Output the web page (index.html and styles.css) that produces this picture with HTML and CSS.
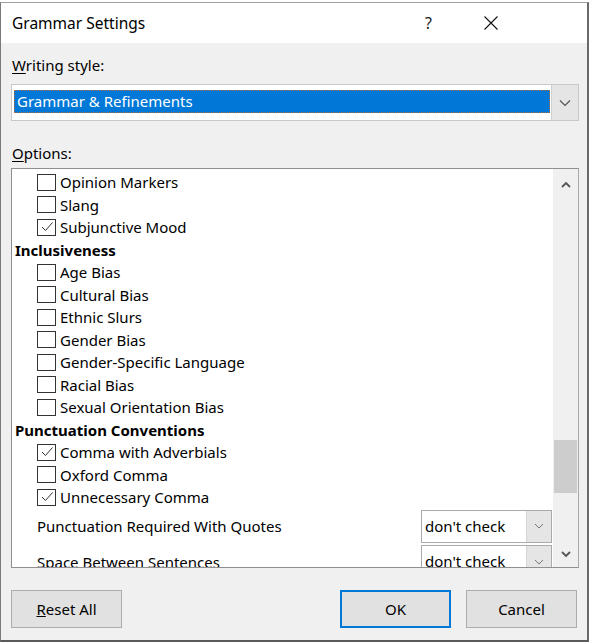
FILE: index.html
```html
<!DOCTYPE html>
<html>
<head>
<meta charset="utf-8">
<link rel="stylesheet" href="styles.css">
</head>
<body>
<div class="dialog">
  <div class="titlebar">
    <span class="title">Grammar Settings</span>
    <span class="help">?</span>
    <svg class="close" width="14" height="14" viewBox="0 0 14 14"><path d="M0.5 0.5L13.5 13.5M13.5 0.5L0.5 13.5" stroke="#111" stroke-width="1.1" fill="none"/></svg>
  </div>
  <div class="client">
    <div class="label"><u>W</u>riting style:</div>
    <div class="combo">
      <div class="combo-field"><span class="sel">Grammar &amp; Refinements</span></div>
      <div class="combo-btn"><svg width="12" height="8" viewBox="0 0 12 8"><path d="M1 1.5L6 6.5L11 1.5" stroke="#555" stroke-width="1.2" fill="none"/></svg></div>
    </div>
    <div class="label options-label"><u>O</u>ptions:</div>
    <div class="listbox">
      <div class="list">
        <div class="item"><span class="box"></span>Opinion Markers</div>
        <div class="item"><span class="box"></span>Slang</div>
        <div class="item"><span class="box checked"><svg width="14" height="12" viewBox="0 0 14 12"><path d="M2 6L5.5 9.5L12.5 1.5" stroke="#333" stroke-width="1" fill="none"/></svg></span>Subjunctive Mood</div>
        <div class="head">Inclusiveness</div>
        <div class="item"><span class="box"></span>Age Bias</div>
        <div class="item"><span class="box"></span>Cultural Bias</div>
        <div class="item"><span class="box"></span>Ethnic Slurs</div>
        <div class="item"><span class="box"></span>Gender Bias</div>
        <div class="item"><span class="box"></span>Gender-Specific Language</div>
        <div class="item"><span class="box"></span>Racial Bias</div>
        <div class="item"><span class="box"></span>Sexual Orientation Bias</div>
        <div class="head">Punctuation Conventions</div>
        <div class="item"><span class="box checked"><svg width="14" height="12" viewBox="0 0 14 12"><path d="M2 6L5.5 9.5L12.5 1.5" stroke="#333" stroke-width="1" fill="none"/></svg></span>Comma with Adverbials</div>
        <div class="item"><span class="box"></span>Oxford Comma</div>
        <div class="item"><span class="box checked"><svg width="14" height="12" viewBox="0 0 14 12"><path d="M2 6L5.5 9.5L12.5 1.5" stroke="#333" stroke-width="1" fill="none"/></svg></span>Unnecessary Comma</div>
        <div class="subrow first">
          <span class="subtext">Punctuation Required With Quotes</span>
          <div class="mini">
            <span class="mini-text">don't check</span>
            <span class="mini-btn"><svg width="10" height="6" viewBox="0 0 10 6"><path d="M1 1L5 5L9 1" stroke="#777" stroke-width="1" fill="none"/></svg></span>
          </div>
        </div>
        <div class="subrow">
          <span class="subtext">Space Between Sentences</span>
          <div class="mini">
            <span class="mini-text">don't check</span>
            <span class="mini-btn"><svg width="10" height="6" viewBox="0 0 10 6"><path d="M1 1L5 5L9 1" stroke="#777" stroke-width="1" fill="none"/></svg></span>
          </div>
        </div>
      </div>
      <div class="scrollbar">
        <div class="arrow up"><svg width="10" height="7" viewBox="0 0 10 7"><path d="M1 6L5 2L9 6" stroke="#555" stroke-width="1.8" fill="none"/></svg></div>
        <div class="track"><div class="thumb"></div></div>
        <div class="arrow down"><svg width="10" height="7" viewBox="0 0 10 7"><path d="M1 1L5 5L9 1" stroke="#555" stroke-width="1.8" fill="none"/></svg></div>
      </div>
    </div>
    <div class="buttons">
      <button class="btn"><u>R</u>eset All</button>
      <span class="spacer"></span>
      <button class="btn default">OK</button>
      <button class="btn">Cancel</button>
    </div>
  </div>
</div>
</body>
</html>
```
FILE: styles.css
```css
html, body {
  margin: 0;
  padding: 0;
  background: #ffffff;
  overflow: hidden;
  height: 642px;
}
body {
  font-family: "Noto Sans", "DejaVu Sans", sans-serif;
  color: #000;
}
.dialog {
  margin-top: 2px;
  border-top: 1px solid #a0a0a0;
  border-left: 1px solid #7a7a7a;
  border-right: 2px solid #6a6a6a;
  border-bottom: 2px solid #5a5a5a;
  display: flex;
  flex-direction: column;
  box-sizing: border-box;
  width: 589px;
  height: 640px;
}
.titlebar {
  height: 40px;
  background: #fff;
  display: flex;
  align-items: center;
  flex: none;
}
.title {
  font-size: 15.5px;
  margin-left: 11px;
  flex: 1;
}
.help {
  font-size: 16px;
  color: #222;
  margin-right: 52px;
}
.close {
  margin-right: 89px;
}
.client {
  flex: 1;
  background: #f0f0f0;
  padding: 0 8px 0 10px;
  display: flex;
  flex-direction: column;
}
.label {
  font-size: 15px;
  line-height: 20px;
  margin-top: 12px;
  margin-left: 1px;
}
.label u { text-decoration-thickness: 1px; text-underline-offset: 2px; }
.combo {
  margin-top: 9px;
  height: 37px;
  border: 1px solid #c8c8c8;
  background: #fff;
  display: flex;
  box-sizing: border-box;
}
.combo-field {
  flex: 1;
  padding: 5px 1px 5px 2px;
}
.sel {
  display: block;
  height: 23px;
  box-sizing: border-box;
  background: #0078d7;
  border: 1px dotted #b06a3a;
  color: #fff;
  font-size: 15px;
  line-height: 21px;
  padding-left: 2px;
}
.combo-btn {
  width: 26px;
  background: #e5e5e5;
  border-left: 1px solid #d0d0d0;
  display: flex;
  align-items: center;
  justify-content: center;
}
.options-label {
  margin-top: 22px;
}
.listbox {
  margin-top: 5px;
  height: 400px;
  border: 1px solid #8f8f8f;
  border-right-color: #a8a8a8;
  background: #fff;
  display: flex;
  box-sizing: border-box;
  overflow: hidden;
}
.list {
  flex: 1;
  padding-top: 2px;
  font-size: 15px;
  overflow: hidden;
}
.item, .head {
  height: 22.5px;
  line-height: 22.5px;
  display: flex;
  align-items: center;
  white-space: nowrap;
}
.item {
  padding-left: 25px;
}
.head {
  padding-left: 3px;
  font-weight: bold;
}
.box {
  width: 19px;
  height: 17px;
  box-sizing: border-box;
  border: 1px solid #333;
  background: #fff;
  margin-right: 4px;
  display: flex;
  align-items: center;
  justify-content: center;
  flex: none;
}
.subrow {
  height: 35.5px;
  display: flex;
  align-items: center;
  padding-left: 25px;
  padding-right: 1px;
  white-space: nowrap;
}
.subrow.first {
  margin-top: 0;
}
.subtext {
  flex: 1;
}
.mini {
  width: 131px;
  height: 33px;
  box-sizing: border-box;
  border: 1px solid #aaa;
  background: #fff;
  display: flex;
}
.mini-text {
  flex: 1;
  padding-left: 3px;
  line-height: 31px;
}
.mini-btn {
  width: 24px;
  background: #e5e5e5;
  border-left: 1px solid #d5d5d5;
  display: flex;
  align-items: center;
  justify-content: center;
}
.scrollbar {
  width: 25px;
  background: #f0f0f0;
  display: flex;
  flex-direction: column;
  flex: none;
}
.arrow {
  height: 26px;
  display: flex;
  align-items: center;
  justify-content: center;
  flex: none;
}
.arrow.up { padding-top: 2px; }
.arrow.down { height: 22px; padding-bottom: 2px; }
.track {
  flex: 1;
}
.thumb {
  margin-top: 243px;
  margin-left: 1px;
  width: 23px;
  height: 53px;
  background: #cdcdcd;
}
.buttons {
  display: flex;
  margin-top: 22px;
  gap: 15px;
  margin-right: 2px;
}
.spacer { flex: 1; }
.btn {
  width: 111px;
  height: 38px;
  background: #e1e1e1;
  border: 1px solid #adadad;
  font-family: inherit;
  font-size: 15px;
  color: #000;
  padding: 0;
}
.btn.default {
  border: 2px solid #0078d7;
}
```
